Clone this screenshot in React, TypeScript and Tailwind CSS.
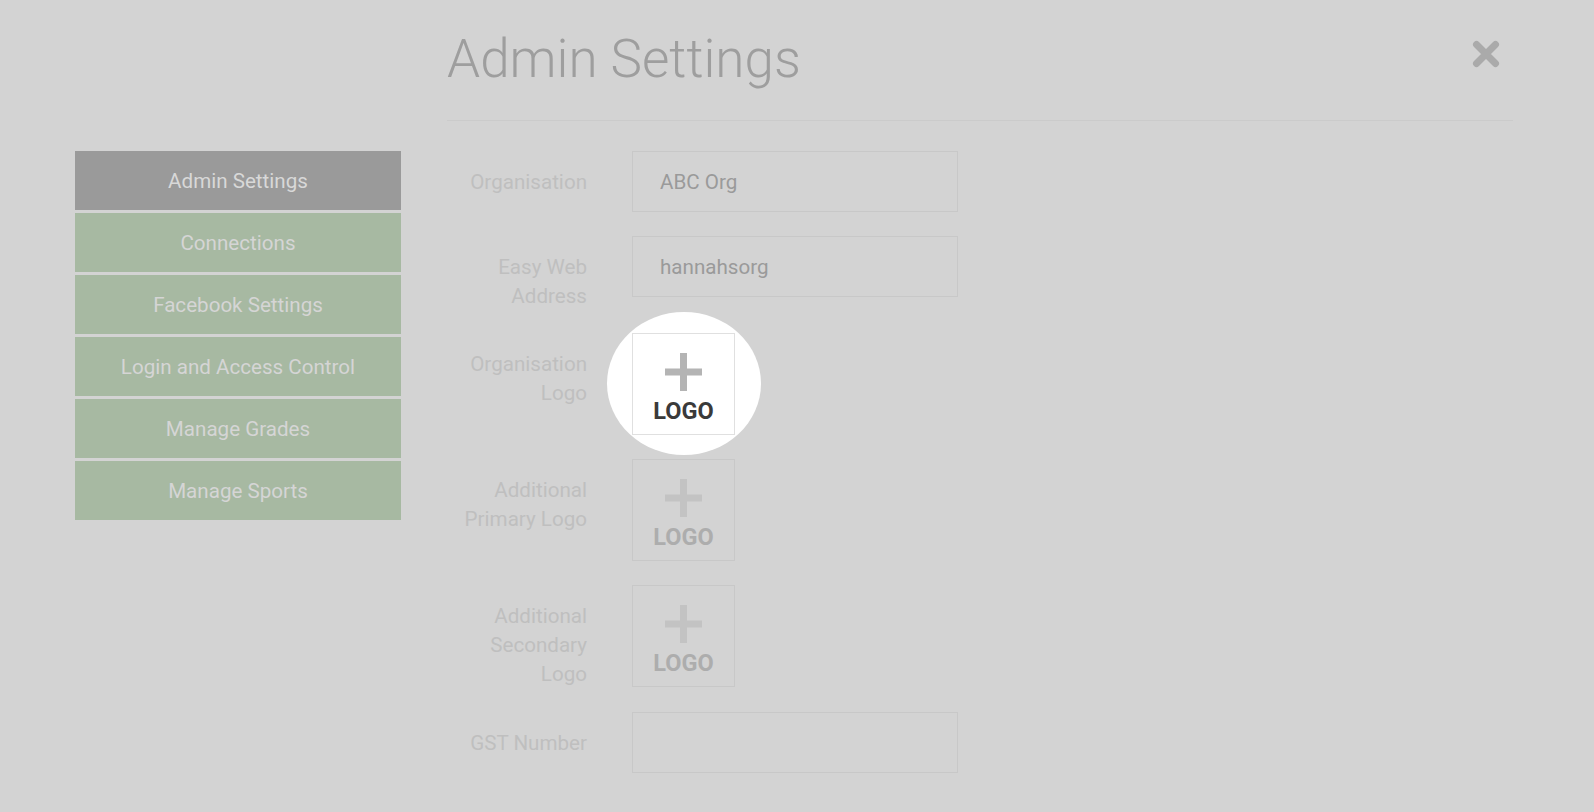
import React from "react";

const menu = [
  "Admin Settings",
  "Connections",
  "Facebook Settings",
  "Login and Access Control",
  "Manage Grades",
  "Manage Sports",
];

function PlusIcon({ color }: { color: string }) {
  return (
    <svg width="37" height="38" viewBox="0 0 37 38" fill={color}>
      <rect x="0" y="15.5" width="37" height="7" />
      <rect x="15" y="0" width="7" height="38" />
    </svg>
  );
}

function LogoUpload({ highlighted = false }: { highlighted?: boolean }) {
  return (
    <div className="relative w-[103px] h-[102px]">
      {highlighted && (
        // spotlight from the onboarding tour
        <div className="absolute -left-[25px] -top-[21px] w-[154px] h-[143px] rounded-[50%] bg-white" />
      )}
      <div
        className={
          highlighted
            ? "relative w-full h-full border border-[#e0e0e0] bg-white flex flex-col items-center pt-[19px]"
            : "relative w-full h-full border border-[#c8c8c8] flex flex-col items-center pt-[19px]"
        }
      >
        <PlusIcon color={highlighted ? "#b4b4b4" : "#c3c3c3"} />
        <span
          className={
            highlighted
              ? "mt-[9px] text-[23.5px] leading-none font-bold text-[#3a3a3a]"
              : "mt-[9px] text-[23.5px] leading-none font-bold text-[#adadad]"
          }
        >
          LOGO
        </span>
      </div>
    </div>
  );
}

function FieldLabel({ children }: { children: React.ReactNode }) {
  return (
    <label className="w-[140px] shrink-0 text-right pt-[17px] -mb-[2px] text-[20.6px] leading-[29px] text-[#bfbfbf]">
      {children}
    </label>
  );
}

function TextField({ value }: { value: string }) {
  return (
    <input
      type="text"
      defaultValue={value}
      className="w-[326px] h-[61px] border border-[#c8c8c8] bg-transparent pl-[27px] pt-px text-[20.6px] text-[#9a9a9a] outline-none"
    />
  );
}

export default function App() {
  return (
    <div className="min-h-screen w-full bg-[#d3d3d3] font-['Roboto',sans-serif] flex items-start pl-[75px]">
      {/* Sidebar */}
      <nav className="w-[326px] mt-[151px] flex flex-col gap-[3px]">
        {menu.map((item, i) => (
          <div
            key={item}
            className={
              i === 0
                ? "h-[59px] flex items-center justify-center pt-[2px] bg-[#9a9a9a] text-[20.6px] text-[#d8d8d8]"
                : "h-[59px] flex items-center justify-center pt-[2px] bg-[#a7b9a2] text-[20.6px] text-[#d5d5d5]"
            }
          >
            {item}
          </div>
        ))}
      </nav>

      {/* Main */}
      <main className="ml-[46px] w-[1066px]">
        <header className="h-[121px] border-b border-[#cbcbcb] flex items-start justify-between pt-[33px]">
          <h1 className="text-[53px] leading-none font-light text-[#9e9e9e]">Admin Settings</h1>
          <button className="mt-[7px] mr-[13px]">
            <svg width="28" height="28" viewBox="0 0 28 28" stroke="#aaaaaa" strokeWidth="7" strokeLinecap="round">
              <path d="M4.5 4.5L23.5 23.5M23.5 4.5L4.5 23.5" />
            </svg>
          </button>
        </header>

        <form className="mt-[30px] flex flex-col gap-[24px]">
          <div className="flex items-start gap-[45px]">
            <FieldLabel>Organisation</FieldLabel>
            <TextField value="ABC Org" />
          </div>
          <div className="flex items-start gap-[45px]">
            <FieldLabel>Easy Web Address</FieldLabel>
            <TextField value="hannahsorg" />
          </div>
          <div className="flex items-start gap-[45px]">
            <FieldLabel>Organisation Logo</FieldLabel>
            <LogoUpload highlighted />
          </div>
          <div className="flex items-start gap-[45px]">
            <FieldLabel>Additional Primary Logo</FieldLabel>
            <LogoUpload />
          </div>
          <div className="flex items-start gap-[45px]">
            <FieldLabel>Additional Secondary Logo</FieldLabel>
            <LogoUpload />
          </div>
          <div className="flex items-start gap-[45px] mt-px">
            <FieldLabel>GST Number</FieldLabel>
            <TextField value="" />
          </div>
        </form>
      </main>
    </div>
  );
}
